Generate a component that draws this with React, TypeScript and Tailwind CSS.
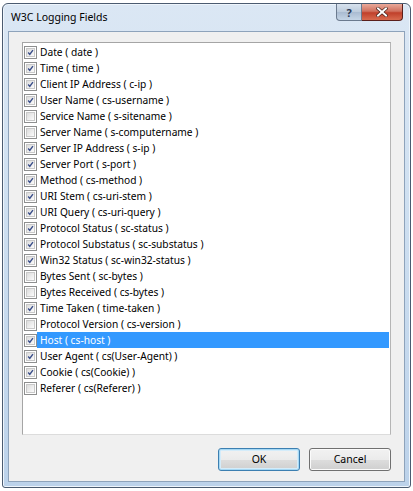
import React from 'react'

const fields: [string, boolean][] = [
  ['Date ( date )', true],
  ['Time ( time )', true],
  ['Client IP Address ( c-ip )', true],
  ['User Name ( cs-username )', true],
  ['Service Name ( s-sitename )', false],
  ['Server Name ( s-computername )', false],
  ['Server IP Address ( s-ip )', true],
  ['Server Port ( s-port )', true],
  ['Method ( cs-method )', true],
  ['URI Stem ( cs-uri-stem )', true],
  ['URI Query ( cs-uri-query )', true],
  ['Protocol Status ( sc-status )', true],
  ['Protocol Substatus ( sc-substatus )', true],
  ['Win32 Status ( sc-win32-status )', true],
  ['Bytes Sent ( sc-bytes )', false],
  ['Bytes Received ( cs-bytes )', false],
  ['Time Taken ( time-taken )', true],
  ['Protocol Version ( cs-version )', false],
  ['Host ( cs-host )', true],
  ['User Agent ( cs(User-Agent) )', true],
  ['Cookie ( cs(Cookie) )', true],
  ['Referer ( cs(Referer) )', false],
]

const CheckBox = ({ checked }: { checked: boolean }) => (
  <div className="w-[13px] h-[13px] border border-[#8e8f8f] bg-white p-[1px] shrink-0">
    <div className="w-full h-full bg-gradient-to-br from-[#dcdcdc] to-[#fbfbfb] border border-[#c9c9c9] relative">
      {checked && (
        <svg viewBox="0 0 9 9" className="absolute inset-0 w-full h-full">
          <path d="M1.5 4.5 L3.6 7 L7.6 1.4" fill="none" stroke="#3b4f8a" strokeWidth="1.8" />
        </svg>
      )}
    </div>
  </div>
)

const Row = ({ label, checked, selected }: { label: string; checked: boolean; selected?: boolean }) => (
  <div className="flex items-center h-[16px] pl-[1px]">
    <CheckBox checked={checked} />
    <div
      className={
        'flex-1 h-[16px] flex items-center pl-[3px] ' +
        (selected ? 'bg-[#3399ff] text-white' : 'text-black')
      }
    >
      {label}
    </div>
  </div>
)

const Button = ({ children, focused }: { children: React.ReactNode; focused?: boolean }) => (
  <button
    className={
      'w-[82px] h-[23px] rounded-[3px] border text-[10.5px] text-black flex items-center justify-center bg-[linear-gradient(#f2f2f2_0%,#ebebeb_50%,#dddddd_51%,#cfcfcf_100%)] ' +
      (focused
        ? 'border-[#3c7fb1] shadow-[inset_0_0_0_1px_#a6d8f4,inset_0_0_0_2px_#d4ecfa]'
        : 'border-[#707070] shadow-[inset_0_0_0_1px_#fbfbfb]')
    }
  >
    {children}
  </button>
)

export default function App() {
  return (
    <div className="w-[413px] h-[491px] bg-white pt-[3px] pl-[2px]" style={{ fontFamily: '"Noto Sans", "Liberation Sans", sans-serif' }}>
      <div className="w-[409px] h-[485px] rounded-t-[6px] rounded-b-[3px] border border-[#4b5b70] bg-[linear-gradient(180deg,#dbe7f4_0%,#cfe0f1_40%,#bcd2ea_100%)] flex flex-col shadow-[inset_0_0_0_1px_#eef5fc]">
        {/* title bar */}
        <div className="h-[27px] flex items-start relative">
          <div className="pl-[8px] pt-[8px] text-[10.5px] text-black leading-none">W3C Logging Fields</div>
          <div className="ml-auto mr-[7px] flex">
            <div className="w-[26px] h-[17px] rounded-bl-[4px] border border-t-0 border-[#6b7a8e] bg-[linear-gradient(#d7e2ee_0%,#bccbdc_50%,#a9bbd1_51%,#c5d5e6_100%)] flex items-center justify-center">
              <span className="text-[11px] font-bold text-[#2a3a55] leading-none">?</span>
            </div>
            <div className="w-[41px] h-[17px] rounded-br-[4px] border border-t-0 border-l-0 border-[#5a1f1b] bg-[linear-gradient(#e9a99a_0%,#d0715f_45%,#c0402b_55%,#d86b4f_100%)] flex items-center justify-center">
              <svg viewBox="0 0 12 10" className="w-[12px] h-[10px]">
                <path d="M2 1.5 L10 8.5 M10 1.5 L2 8.5" stroke="#3b1a14" strokeWidth="3.2" strokeLinecap="square" />
                <path d="M2 1.5 L10 8.5 M10 1.5 L2 8.5" stroke="#ffffff" strokeWidth="2" strokeLinecap="square" />
              </svg>
            </div>
          </div>
        </div>
        {/* client area */}
        <div className="flex-1 mx-[5px] mb-[5px] border border-[#8ea3bb] bg-[#f0f0f0] flex flex-col px-[13px] pt-[10px]">
          <div className="h-[393px] border border-[#a5a5a5] border-b-[#dcdcdc] border-r-[#b5b5b5] bg-white pt-[1px] pr-[1px] text-[10.2px] leading-none">
            {fields.map(([label, checked], i) => (
              <Row key={label} label={label} checked={checked} selected={i === 18} />
            ))}
          </div>
          <div className="flex justify-end gap-[9px] mt-[13px]">
            <Button focused>OK</Button>
            <Button>Cancel</Button>
          </div>
        </div>
      </div>
    </div>
  )
}
